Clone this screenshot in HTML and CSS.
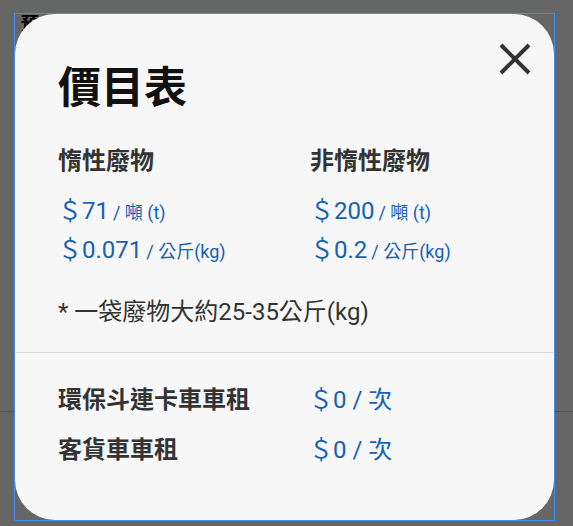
FILE: index.html
```html
<!DOCTYPE html>
<html lang="zh-Hant">
<head>
    <meta charset="UTF-8">
    <meta name="viewport" content="width=device-width, initial-scale=1.0">
    <title>價目表</title>
    <link rel="stylesheet" href="styles.css">
</head>
<body>
    <div class="page">
        <div class="page-head">預</div>
    </div>

    <div class="overlay">
        <div class="frame">
            <div class="modal">
                <div class="modal-head">
                    <h1 class="modal-title">價目表</h1>
                    <button class="close-btn" aria-label="關閉">
                        <svg width="32" height="32" viewBox="0 0 32 32">
                            <path d="M2 2 L30 30 M30 2 L2 30" stroke="#333" stroke-width="4" fill="none"/>
                        </svg>
                    </button>
                </div>

                <div class="price-grid">
                    <div class="price-col">
                        <h2 class="col-title">惰性廢物</h2>
                        <p class="price"><span class="amount">＄71</span> <span class="unit">/ 噸 (t)</span></p>
                        <p class="price"><span class="amount">＄0.071</span> <span class="unit">/ 公斤(kg)</span></p>
                    </div>
                    <div class="price-col">
                        <h2 class="col-title">非惰性廢物</h2>
                        <p class="price"><span class="amount">＄200</span> <span class="unit">/ 噸 (t)</span></p>
                        <p class="price"><span class="amount">＄0.2</span> <span class="unit">/ 公斤(kg)</span></p>
                    </div>
                </div>

                <p class="note">* 一袋廢物大約25-35公斤(kg)</p>

                <hr class="divider">

                <div class="rent-list">
                    <div class="rent-row">
                        <span class="rent-name">環保斗連卡車車租</span>
                        <span class="rent-price">＄0 / 次</span>
                    </div>
                    <div class="rent-row">
                        <span class="rent-name">客貨車車租</span>
                        <span class="rent-price">＄0 / 次</span>
                    </div>
                </div>
            </div>
        </div>
    </div>
</body>
</html>
```

FILE: styles.css
```css
html, body {
    margin: 0;
    padding: 0;
}
body {
    font-family: Roboto, "Noto Sans CJK TC", sans-serif;
    background: #fff;
    overflow: hidden;
}
.page {
    height: 411px;
    border-bottom: 1px solid #d0d0d0;
}
.page-head {
    padding: 14px 0 0 21px;
    font-size: 18px;
    font-weight: 700;
    line-height: 20px;
    color: #000;
}
.overlay {
    position: fixed;
    top: 0;
    left: 0;
    right: 0;
    bottom: 0;
    background: rgba(0, 0, 0, 0.6);
}
.frame {
    margin: 13px 0 0 14px;
    width: 539px;
    height: 506px;
    border: 1px solid #3d8ff0;
}
.modal {
    height: 100%;
    box-sizing: border-box;
    border-radius: 40px;
    background: #f7f7f7;
    padding: 28px 43px 0;
    color: #333;
}
.modal-head {
    display: flex;
    justify-content: space-between;
    align-items: flex-start;
    margin-right: -20px;
}
.modal-title {
    margin: 20px 0 0;
    font-size: 43px;
    line-height: 52px;
    font-weight: 700;
    color: #111;
}
.close-btn {
    margin-top: 1px;
    width: 32px;
    height: 32px;
    padding: 0;
    border: none;
    background: none;
    cursor: pointer;
}
.close-btn svg {
    display: block;
}
.price-grid {
    display: grid;
    grid-template-columns: 252px 1fr;
    margin-top: 31px;
}
.col-title {
    margin: 0 0 16px;
    font-size: 24px;
    line-height: 32px;
    font-weight: 700;
}
.price {
    margin: 0;
    line-height: 37px;
    color: #1661b8;
}
.amount {
    font-size: 24px;
}
.unit {
    font-size: 18px;
}
.note {
    margin: 25px 0 0;
    font-size: 24px;
    line-height: 32px;
}
.divider {
    margin: 24px -43px 0;
    border: none;
    border-top: 1px solid #dcdcdc;
}
.rent-list {
    display: flex;
    flex-direction: column;
    gap: 18px;
    margin-top: 31px;
}
.rent-row {
    display: grid;
    grid-template-columns: 251px 1fr;
    font-size: 24px;
    line-height: 32px;
}
.rent-name {
    font-weight: 700;
}
.rent-price {
    color: #1661b8;
}
```
